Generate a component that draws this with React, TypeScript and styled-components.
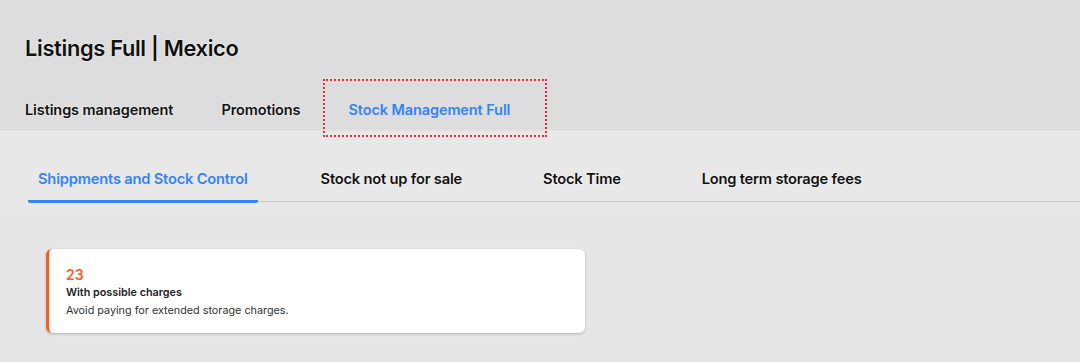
import styled, { createGlobalStyle } from 'styled-components';

const GlobalStyle = createGlobalStyle`
    body {
        margin: 0;
        background: #e6e6e6;
        font-family: Inter, 'Open Sans', sans-serif;
        color: #111;
    }
`;

const Header = styled.header`
    background: #dddddd;
    padding: 35px 0 0 25px;
`;

const Title = styled.h1`
    margin: 0;
    font-size: 21.8px;
    line-height: 26px;
    font-weight: 600;
    letter-spacing: -0.3px;
    text-shadow: 0 0 2px #fff;
`;

const NavRow = styled.nav`
    display: flex;
    height: 40px;
    margin-top: 29px;
`;

const NavTab = styled.div<{ $active?: boolean }>`
    position: relative;
    display: flex;
    align-items: center;
    padding: 0 24px 2px;
    font-size: 14.5px;
    font-weight: 600;
    letter-spacing: -0.1px;
    color: ${(p) => (p.$active ? '#3483fa' : '#111')};
    text-shadow: ${(p) => (p.$active ? 'none' : '0 0 2px #fff')};
    &:first-child {
        padding-left: 0;
    }
    ${(p) =>
        p.$active &&
        `
        &::after {
            content: '';
            position: absolute;
            left: -1px;
            right: -13px;
            top: -11px;
            bottom: -7px;
            border: 2px dotted #e8303a;
            pointer-events: none;
        }
    `}
`;

const SubHeader = styled.div`
    background: #e8e8e8;
    border-top: 1px solid #e3e3e3;
    padding: 33px 0 14px 28px;
`;

const SubTabs = styled.div`
    display: flex;
    gap: 61px;
    border-bottom: 1px solid #c8c8c8;
`;

const SubTab = styled.div<{ $active?: boolean }>`
    padding: 6px 10px 12px;
    font-size: 14.7px;
    line-height: 18px;
    font-weight: 600;
    letter-spacing: -0.2px;
    color: ${(p) => (p.$active ? '#3483fa' : '#111')};
    text-shadow: ${(p) => (p.$active ? 'none' : '0 0 2px #fff')};
    border-bottom: 3px solid ${(p) => (p.$active ? '#3483fa' : 'transparent')};
    border-radius: 2px;
    margin-bottom: -2px;
    &:first-child {
        margin-right: -8px;
    }
`;

const Content = styled.main`
    padding: 33px 46px;
`;

const Card = styled.div`
    box-sizing: border-box;
    width: 539px;
    height: 84px;
    padding: 17px 20px 0 17px;
    background: #fff;
    border-left: 3px solid #ff5a1f;
    border-radius: 6px;
    box-shadow: 0 1px 3px rgba(0, 0, 0, 0.22);
`;

const Count = styled.div`
    font-size: 14px;
    line-height: 18px;
    font-weight: 600;
    color: #ff5a1f;
`;

const CardTitle = styled.div`
    margin-top: 1px;
    font-size: 10.8px;
    line-height: 16px;
    font-weight: 600;
    color: #222;
`;

const CardText = styled.div`
    margin-top: 2px;
    font-size: 10.8px;
    line-height: 16px;
    color: #333;
`;

const topTabs = ['Listings management', 'Promotions', 'Stock Management Full'];
const subTabs = [
    'Shippments and Stock Control',
    'Stock not up for sale',
    'Stock Time',
    'Long term storage fees',
];

export default function App() {
    return (
        <>
            <GlobalStyle />
            <Header>
                <Title>Listings Full | Mexico</Title>
                <NavRow>
                    {topTabs.map((label, i) => (
                        <NavTab key={label} $active={i === 2}>
                            {label}
                        </NavTab>
                    ))}
                </NavRow>
            </Header>
            <SubHeader>
                <SubTabs>
                    {subTabs.map((label, i) => (
                        <SubTab key={label} $active={i === 0}>
                            {label}
                        </SubTab>
                    ))}
                </SubTabs>
            </SubHeader>
            <Content>
                <Card>
                    <Count>23</Count>
                    <CardTitle>With possible charges</CardTitle>
                    <CardText>Avoid paying for extended storage charges.</CardText>
                </Card>
            </Content>
        </>
    );
}
